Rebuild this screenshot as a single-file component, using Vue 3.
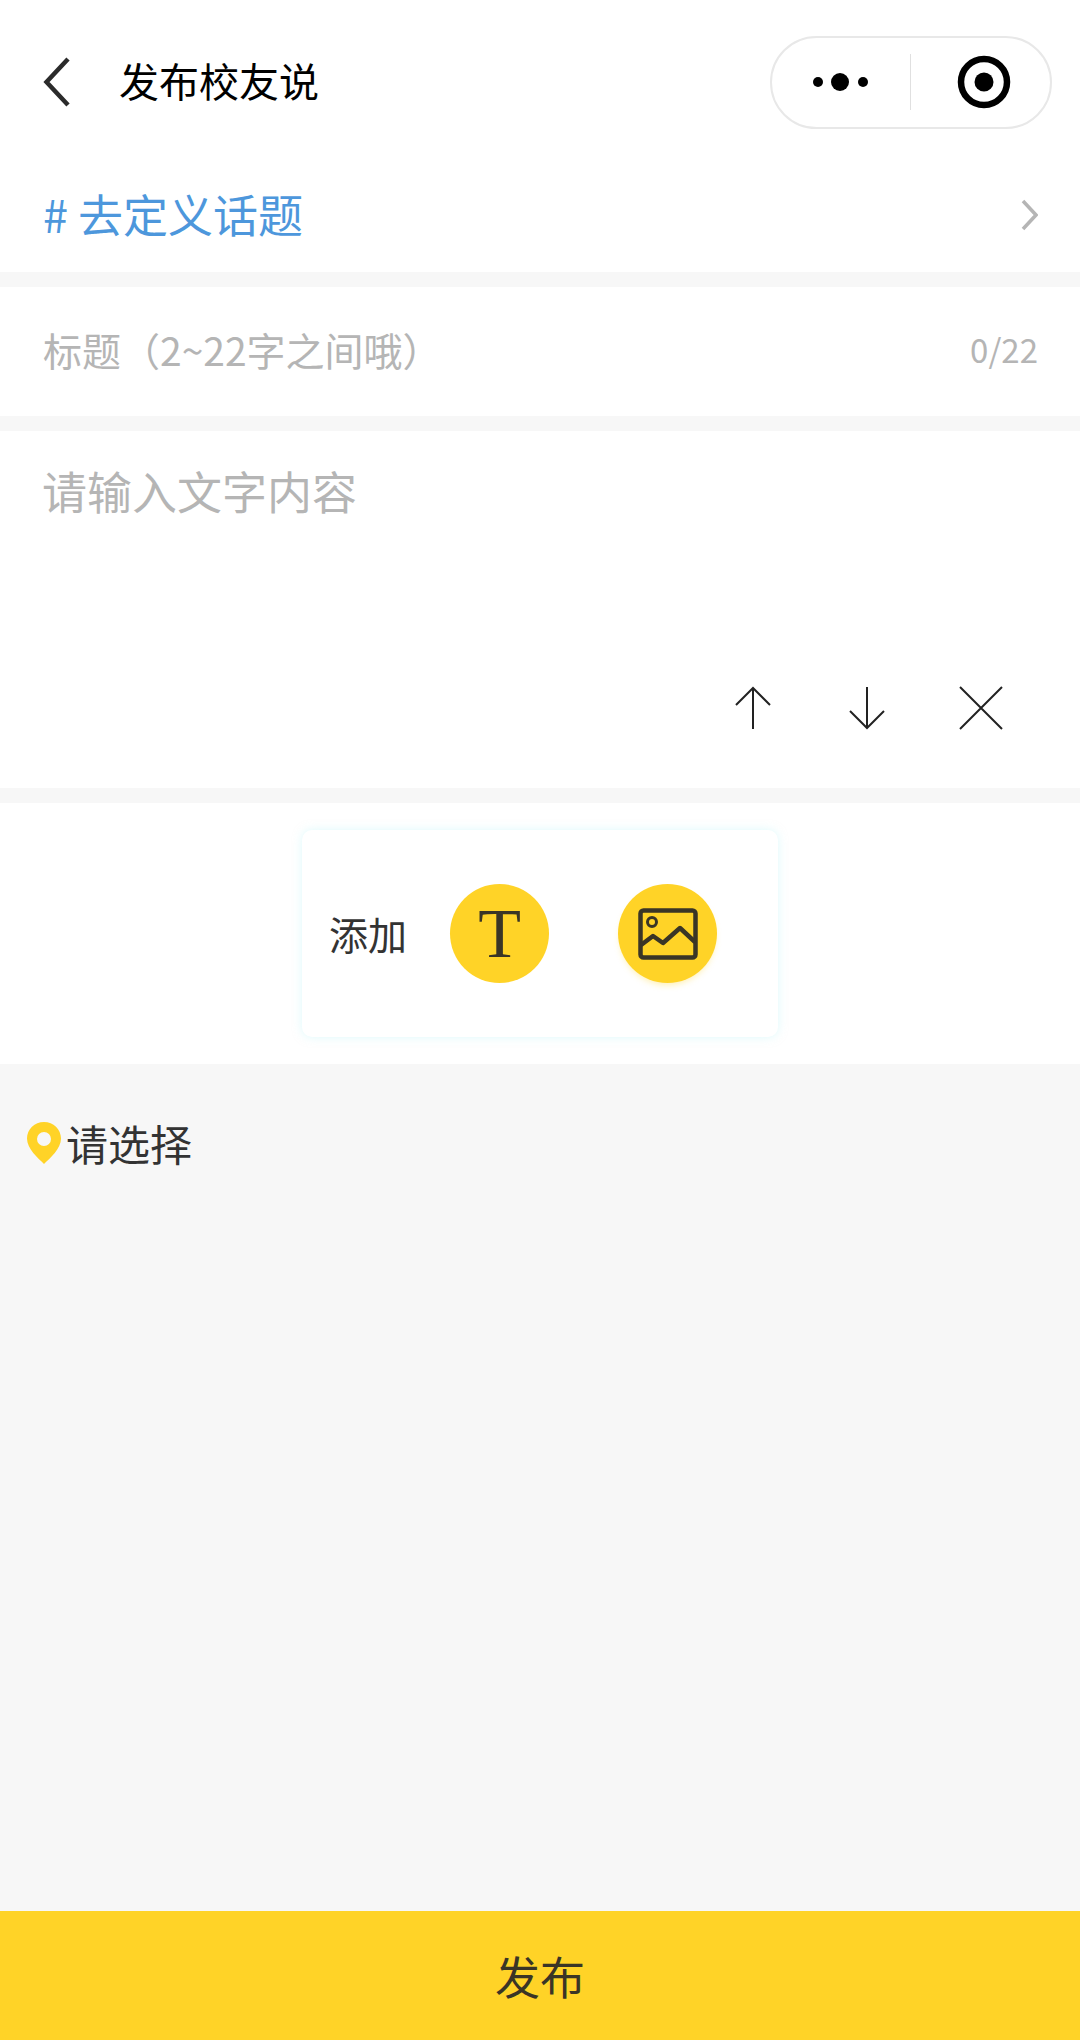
<script setup>
const title = '发布校友说'
const counter = '0/22'
</script>

<template>
  <div class="page">
    <header class="nav">
      <svg class="back" width="27" height="50" viewBox="0 0 27 50">
        <path d="M25 2 L3.500 25 L25 48" fill="none" stroke="#2b2b2b" stroke-width="4.500" />
      </svg>
      <span class="nav-title">{{ title }}</span>
      <div class="capsule">
        <svg class="capsule-dots" width="60" height="20" viewBox="0 0 60 20">
          <circle cx="7" cy="10" r="5" fill="#000" />
          <circle cx="29" cy="10" r="9" fill="#000" />
          <circle cx="52" cy="10" r="5" fill="#000" />
        </svg>
        <i class="capsule-line"></i>
        <svg class="capsule-target" width="54" height="54" viewBox="0 0 54 54">
          <circle cx="27" cy="27" r="23" fill="none" stroke="#000" stroke-width="6.500" />
          <circle cx="27" cy="27" r="9.500" fill="#000" />
        </svg>
      </div>
    </header>

    <section class="row topic">
      <span class="topic-text"># 去定义话题</span>
      <svg width="17" height="32" viewBox="0 0 17 32">
        <path d="M2 2 L15 16 L2 30" fill="none" stroke="#b5b5b5" stroke-width="3.500" />
      </svg>
    </section>

    <section class="row title-row">
      <span class="title-hint">标题（2~22字之间哦）</span>
      <span class="count">{{ counter }}</span>
    </section>

    <section class="content">
      <div class="content-hint">请输入文字内容</div>
      <div class="tools">
        <svg width="44" height="44" viewBox="0 0 44 44">
          <path d="M22 43 V2 M5 19 L22 2 L39 19" fill="none" stroke="#222" stroke-width="2" />
        </svg>
        <svg width="44" height="44" viewBox="0 0 44 44">
          <path d="M22 1 V42 M5 25 L22 42 L39 25" fill="none" stroke="#222" stroke-width="2" />
        </svg>
        <svg width="44" height="44" viewBox="0 0 44 44">
          <path d="M1 1 L43 43 M43 1 L1 43" fill="none" stroke="#222" stroke-width="2" />
        </svg>
      </div>
    </section>

    <section class="add">
      <div class="add-card">
        <span class="add-label">添加</span>
        <div class="circle text-btn">T</div>
        <div class="circle image-btn">
          <svg width="60" height="52" viewBox="0 0 60 52">
            <rect x="2.500" y="2.500" width="55" height="47" rx="3" fill="none" stroke="#3a3526" stroke-width="4.500" />
            <circle cx="14" cy="14" r="4.500" fill="none" stroke="#3a3526" stroke-width="3" />
            <path d="M3 37 L15 28 L25 35 L42 20 L57 34" fill="none" stroke="#3a3526" stroke-width="4.500" stroke-linejoin="round" />
          </svg>
        </div>
      </div>
    </section>

    <main class="rest">
      <div class="location">
        <svg width="34" height="42" viewBox="0 0 34 42">
          <path fill="#ffd327" fill-rule="evenodd" d="M17 0 C7.600 0 0 7.400 0 16.500 C0 27 11 36 17 42 C23 36 34 27 34 16.500 C34 7.400 26.400 0 17 0 Z M17 10 A7 7 0 1 1 17 24 A7 7 0 1 1 17 10 Z" />
        </svg>
        <span class="location-text">请选择</span>
      </div>
    </main>

    <button class="publish">发布</button>
  </div>
</template>

<style scoped>
.page {
  display: flex;
  flex-direction: column;
  height: 2040px;
  background: #f7f7f7;
  font-family: "Noto Sans CJK SC", "Noto Sans", sans-serif;
}

.nav {
  display: flex;
  align-items: center;
  height: 164px;
  padding: 0 28px 0 43px;
  box-sizing: border-box;
  background: #fff;
}

.back {
  flex: none;
}

.nav-title {
  margin: 0 0 5px 49px;
  font-size: 40px;
  color: #000;
}

.capsule {
  display: flex;
  align-items: center;
  box-sizing: border-box;
  width: 282px;
  height: 93px;
  margin-left: auto;
  border: 2px solid #e8e8e8;
  border-radius: 47px;
}

.capsule-dots {
  margin-left: 39px;
}

.capsule-line {
  width: 1px;
  height: 56px;
  margin-left: 39px;
  background: #e0e0e0;
}

.capsule-target {
  margin-left: 46px;
}

.row {
  display: flex;
  align-items: center;
  justify-content: space-between;
  background: #fff;
  padding: 0 42px 0 43px;
}

.topic {
  height: 108px;
  margin-bottom: 15px;
  padding-bottom: 6px;
  box-sizing: border-box;
}

.topic-text {
  margin-bottom: 4px;
  font-size: 45px;
  color: #4d97dc;
}

.title-row {
  box-sizing: border-box;
  height: 129px;
  margin-bottom: 15px;
  padding-bottom: 6px;
}

.title-hint {
  font-size: 39px;
  color: #b5b5b5;
}

.count {
  font-size: 33px;
  color: #b5b5b5;
}

.content {
  display: flex;
  flex-direction: column;
  box-sizing: border-box;
  height: 357px;
  margin-bottom: 15px;
  padding: 25px 0 0 42px;
  background: #fff;
}

.content-hint {
  font-size: 45px;
  line-height: 70px;
  color: #b5b5b5;
}

.tools {
  display: flex;
  align-items: center;
  gap: 70px;
  margin: 160px 0 0 auto;
  padding-right: 77px;
}

.add {
  display: flex;
  justify-content: center;
  box-sizing: border-box;
  height: 261px;
  padding-top: 27px;
  background: #fff;
}

.add-card {
  display: flex;
  align-items: center;
  box-sizing: border-box;
  width: 476px;
  height: 207px;
  padding-left: 27px;
  border-radius: 10px;
  background: #fff;
  box-shadow: 0 0 10px rgba(190, 245, 250, 0.5);
}

.add-label {
  margin-bottom: 2px;
  font-size: 39px;
  color: #333;
}

.circle {
  display: flex;
  align-items: center;
  justify-content: center;
  width: 99px;
  height: 99px;
  border-radius: 50%;
  background: #ffd327;
}

.text-btn {
  margin-left: 43px;
  font-family: "Liberation Serif", serif;
  font-size: 70px;
  line-height: 1;
  color: #3a3526;
}

.image-btn {
  margin-left: 69px;
  box-shadow: 0 4px 6px -2px rgba(255, 211, 39, 0.35);
}

.rest {
  flex: 1;
  padding: 48px 0 0 27px;
}

.location {
  display: flex;
  align-items: center;
  gap: 5px;
}

.location-text {
  font-size: 42px;
  color: #333;
}

.publish {
  height: 129px;
  border: 0;
  background: #ffd327;
  font-family: inherit;
  font-size: 45px;
  color: #3a3526;
}
</style>
